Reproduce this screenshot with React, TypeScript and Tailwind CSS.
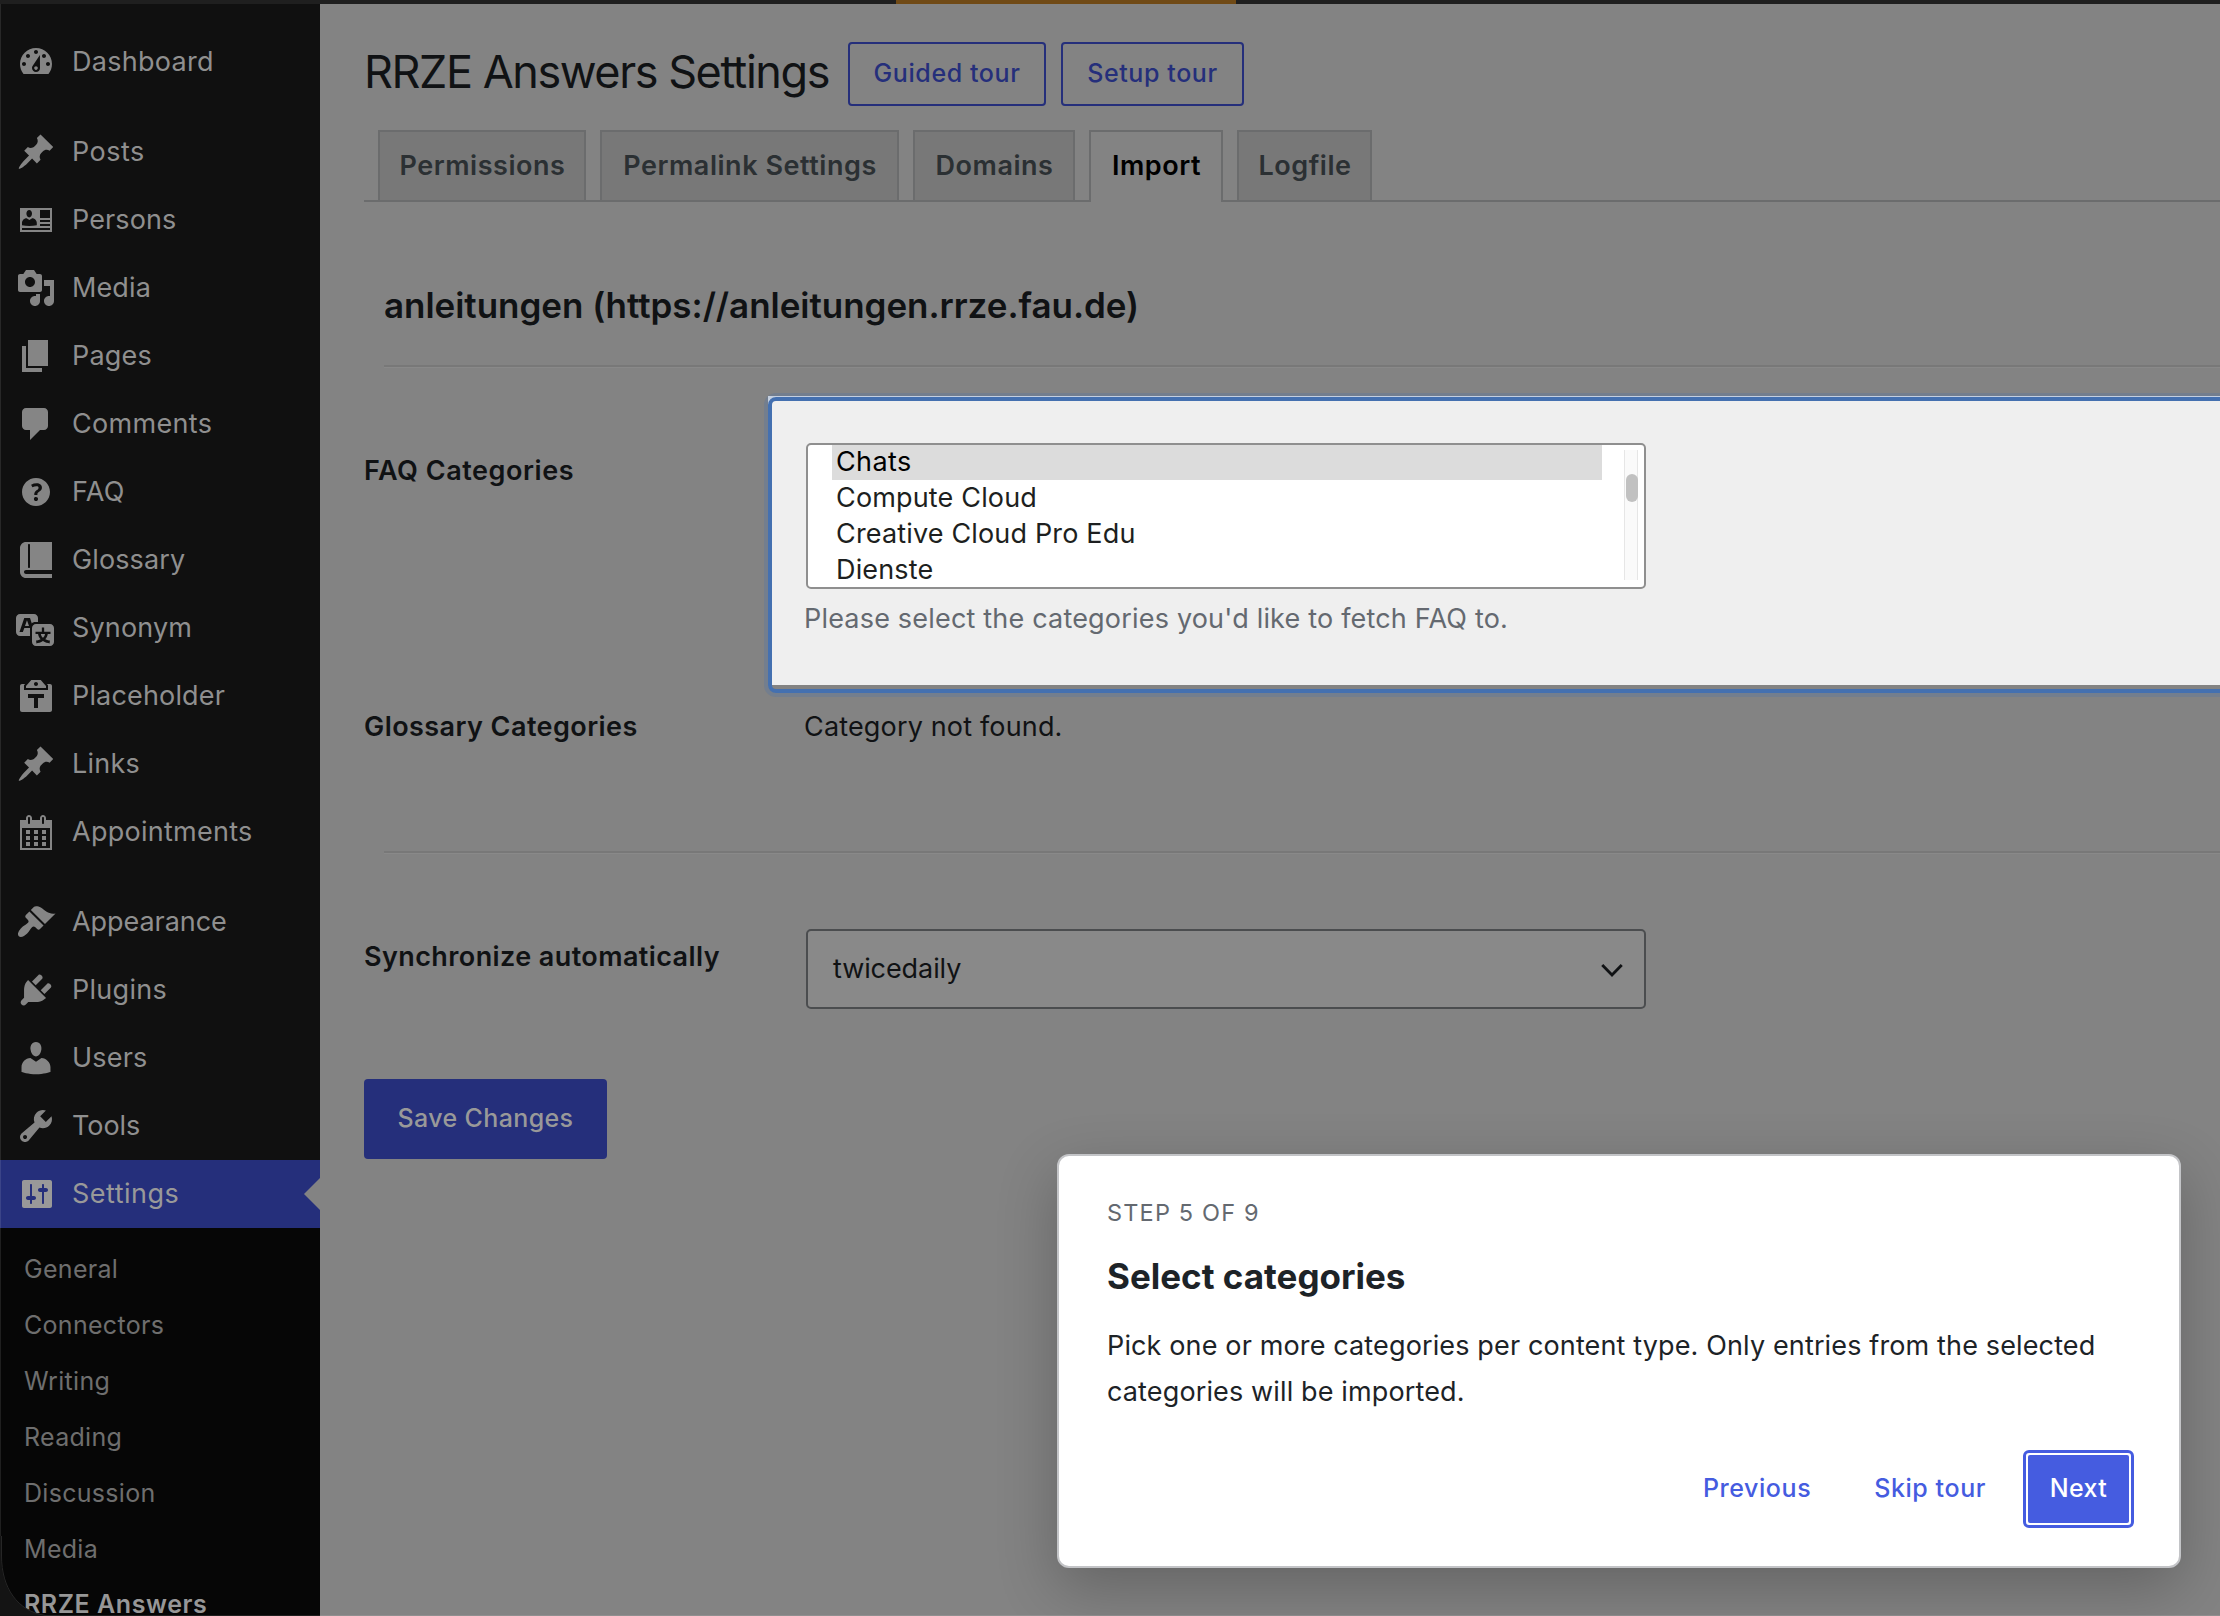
import type { ReactNode } from "react";

const icons: Record<string, string> = {
  dashboard:
    "M3.76 16h12.48c1.1-1.37 1.76-3.11 1.76-5 0-4.42-3.58-8-8-8s-8 3.58-8 8c0 1.89.66 3.63 1.76 5zM10 4c.55 0 1 .45 1 1s-.45 1-1 1-1-.45-1-1 .45-1 1-1zM6 6c.55 0 1 .45 1 1s-.45 1-1 1-1-.45-1-1 .45-1 1-1zM14 6c.55 0 1 .45 1 1s-.45 1-1 1-1-.45-1-1 .45-1 1-1zM4 10c.55 0 1 .45 1 1s-.45 1-1 1-1-.45-1-1 .45-1 1-1zM16 10c.55 0 1 .45 1 1s-.45 1-1 1-1-.45-1-1 .45-1 1-1zM11.95 6.5l.05 6.6c0 1.1-.9 1.95-2 1.95s-2-.9-2-2c0-.32.08-.62.21-.89L11.95 6.5zM10 12.15c.5 0 .9.4.9.9s-.4.9-.9.9-.9-.4-.9-.9.4-.9.9-.9z",
  pin: "M10.44 3.02l1.82-1.82 6.36 6.35-1.83 1.82c-1.05-.68-2.48-.57-3.41.36l-.75.75c-.92.93-1.04 2.35-.35 3.41l-1.83 1.82-2.41-2.41-2.8 2.79c-.42.42-3.38 2.71-3.8 2.29s1.86-3.39 2.28-3.81l2.79-2.79L4.1 9.36l1.83-1.82c1.05.69 2.48.57 3.4-.36l.75-.75c.93-.92 1.05-2.35.36-3.41z",
  idCard:
    "M18 16H2V4h16v12zM6.6 8.7C7.4 8.7 8 7.8 8 6.8S7.4 5 6.6 5 5.2 5.8 5.2 6.8s.6 1.9 1.4 1.9zM12 9h5V5h-5v4zM3 12.6c2.2.55 5 .55 7.4 0v-1.1c0-1.3-1-2.4-2.3-2.4l-1.4.9-1.4-.9C4 9.1 3 10.2 3 11.5v1.1zM17 11v-1h-5v1h5zM17 13v-1h-5v1h5zM17 15v-1H3v1h14z",
  media:
    "M13 11V4c0-.55-.45-1-1-1h-1.67L9 1H5L3.67 3H2c-.55 0-1 .45-1 1v7c0 .55.45 1 1 1h10c.55 0 1-.45 1-1zM7 4.5c1.38 0 2.5 1.12 2.5 2.5S8.38 9.5 7 9.5 4.5 8.38 4.5 7 5.62 4.5 7 4.5zM14 6h5v10.5c0 1.38-1.12 2.5-2.5 2.5S14 17.88 14 16.5s1.12-2.5 2.5-2.5c.17 0 .34.02.5.05V9h-3V6zm-4 8.05V13h2v3.5c0 1.38-1.12 2.5-2.5 2.5S7 17.88 7 16.5 8.12 14 9.5 14c.17 0 .34.02.5.05z",
  page: "M6 15V2h10v13H6zm-1 1h8v2H3V5h2v11z",
  comment:
    "M5 2h9c1.1 0 2 .9 2 2v7c0 1.1-.9 2-2 2h-2l-5 5v-5H5c-1.1 0-2-.9-2-2V4c0-1.1.9-2 2-2z",
  help: "M17 10c0-3.87-3.14-7-7-7-3.87 0-7 3.13-7 7s3.13 7 7 7c3.86 0 7-3.13 7-7zm-6.3 1.48H9.14v-.43c0-.38.08-.7.24-.98s.46-.57.88-.89c.41-.29.68-.53.81-.71.14-.18.2-.39.2-.62 0-.25-.09-.44-.28-.58-.19-.13-.45-.19-.79-.19-.58 0-1.25.19-2 .57l-.64-1.28c.87-.49 1.8-.74 2.77-.74.81 0 1.45.2 1.92.58.48.39.71.91.71 1.55 0 .43-.09.8-.29 1.11-.19.32-.57.67-1.11 1.06-.38.28-.61.49-.71.63-.1.15-.15.34-.15.57v.35zm-1.47 2.74c-.18-.17-.27-.42-.27-.73 0-.33.08-.58.26-.75s.43-.25.77-.25c.32 0 .57.09.75.26s.27.42.27.74c0 .3-.09.55-.27.72-.18.18-.43.27-.75.27-.33 0-.58-.09-.76-.26z",
  book: "M5 17h13v2H5c-1.66 0-3-1.34-3-3V4c0-1.66 1.34-3 3-3h13v14H5c-.55 0-1 .45-1 1s.45 1 1 1zm2-3.5v-11c0-.28-.22-.5-.5-.5s-.5.22-.5.5v11c0 .28.22.5.5.5s.5-.22.5-.5z",
  translation:
    "M11 7H9.49c-.63 0-1.25.3-1.59.7L7 5H4.13l-2.39 7h1.69l.74-2H7v4H2c-1.1 0-2-.9-2-2V5c0-1.1.9-2 2-2h7c1.1 0 2 .9 2 2v2zM6.51 9H4.49l1-2.93zM10 8h7c1.1 0 2 .9 2 2v7c0 1.1-.9 2-2 2h-7c-1.1 0-2-.9-2-2v-7c0-1.1.9-2 2-2zm7.25 5v-1.08h-3.17V9.75h-1.16v2.17H9.75V13h1.28c.11.85.56 1.85 1.28 2.62-.87.36-1.89.62-2.31.62-.01.02.22.97.2 1.46.84 0 2.21-.5 3.28-1.15 1.09.65 2.48 1.15 3.34 1.15-.02-.49.2-1.44.2-1.46-.43 0-1.49-.27-2.38-.63.7-.77 1.14-1.77 1.25-2.61h1.36zm-3.81 1.93c-.5-.46-.85-1.13-1.01-1.93h2.09c-.17.8-.51 1.47-1 1.93l-.04.03s-.03-.02-.04-.03z",
  clipboard:
    "M12.38 2L15 5v1H5V5l2.64-3h4.74zM10 5c.55 0 1-.44 1-1 0-.55-.45-1-1-1s-1 .45-1 1c0 .56.45 1 1 1zm5.45-1H17c.55 0 1 .45 1 1v12c0 .56-.45 1-1 1H3c-.55 0-1-.44-1-1V5c0-.55.45-1 1-1h1.55L4 4.63V7h12V4.63zM14 11V9H6v2h3v5h2v-5h3z",
  calendar:
    "M15 4h3v15H2V4h3V3c0-.41.15-.76.44-1.06.29-.29.65-.44 1.06-.44s.77.15 1.06.44c.29.3.44.65.44 1.06v1h4V3c0-.41.15-.76.44-1.06.29-.29.65-.44 1.06-.44s.77.15 1.06.44c.29.3.44.65.44 1.06v1zM6 3v2.5c0 .14.05.26.15.36.09.09.21.14.35.14s.26-.05.35-.14c.1-.1.15-.22.15-.36V3c0-.14-.05-.26-.15-.35-.09-.1-.21-.15-.35-.15s-.26.05-.35.15c-.1.09-.15.21-.15.35zm7 0v2.5c0 .14.05.26.14.36.1.09.22.14.36.14s.26-.05.36-.14c.09-.1.14-.22.14-.36V3c0-.14-.05-.26-.14-.35-.1-.1-.22-.15-.36-.15s-.26.05-.36.15c-.09.09-.14.21-.14.35zm4 15V8H3v10h14zM7 9v2H5V9h2zm2 0h2v2H9V9zm4 2V9h2v2h-2zm-6 1v2H5v-2h2zm2 0h2v2H9v-2zm4 2v-2h2v2h-2zm-6 1v2H5v-2h2zm4 2H9v-2h2v2zm4 0h-2v-2h2v2z",
  brush:
    "M14.48 11.06L7.41 3.99l1.5-1.5c.5-.56 2.3-.47 3.51.32 1.21.8 1.43 1.28 2.91 2.1 1.18.64 2.45 1.26 4.45.85zm-.71.71L6.7 4.7 4.93 6.47c-.39.39-.39 1.02 0 1.41l1.06 1.06c.39.39.39 1.03 0 1.42-.6.6-1.43 1.11-2.21 1.69-.35.26-.7.53-1.01.84C1.43 14.23.4 16.08 1.4 17.07c.99 1 2.84-.03 4.18-1.36.31-.31.58-.66.85-1.02.57-.78 1.08-1.61 1.69-2.21.39-.39 1.02-.39 1.41 0l1.06 1.06c.39.39 1.02.39 1.41 0z",
  plug: "M13.11 4.36L9.87 7.6 8 5.73l3.24-3.24c.35-.34 1.05-.2 1.56.32.52.51.66 1.21.31 1.55zm-8 1.77l.91-1.12 9.01 9.01-1.19.84c-.71.71-2.63 1.16-3.82 1.16H6.14L4.9 17.26c-.59.59-1.54.59-2.12 0-.59-.58-.59-1.53 0-2.12l1.24-1.24v-3.88c0-1.13.4-3.19 1.09-3.89zm7.26 3.97l3.24-3.24c.34-.35 1.04-.21 1.55.31.52.51.66 1.21.31 1.55l-3.24 3.25z",
  user: "M10 9.25c-2.27 0-2.73-3.44-2.73-3.44C7 4.02 7.82 2 9.97 2c2.16 0 2.98 2.02 2.71 3.81 0 0-.41 3.44-2.68 3.44zm0 2.57L12.72 10c2.39 0 4.52 2.33 4.52 4.53v2.49s-3.65 1.13-7.24 1.13c-3.65 0-7.24-1.13-7.24-1.13v-2.49c0-2.25 1.94-4.48 4.47-4.48z",
  wrench:
    "M16.68 9.77c-1.34 1.34-3.3 1.67-4.95.99l-5.41 6.52c-.99.99-2.59.99-3.58 0s-.99-2.59 0-3.57l6.52-5.42c-.68-1.65-.35-3.61.99-4.95 1.28-1.28 3.12-1.62 4.72-1.06l-2.89 2.89 2.82 2.82 2.86-2.87c.53 1.58.18 3.39-1.08 4.65zM3.81 16.21c.4.39 1.04.39 1.43 0 .4-.4.4-1.04 0-1.43-.39-.4-1.03-.4-1.43 0-.39.39-.39 1.03 0 1.43z",
  sliders:
    "M18 16V4c0-.55-.45-1-1-1H4c-.55 0-1 .45-1 1v12c0 .55.45 1 1 1h13c.55 0 1-.45 1-1zM8 11h1c.55 0 1 .45 1 1s-.45 1-1 1H8v1.5c0 .28-.22.5-.5.5s-.5-.22-.5-.5V13H6c-.55 0-1-.45-1-1s.45-1 1-1h1V5.5c0-.28.22-.5.5-.5s.5.22.5.5V11zm5-2h-1c-.55 0-1-.45-1-1s.45-1 1-1h1V5.5c0-.28.22-.5.5-.5s.5.22.5.5V7h1c.55 0 1 .45 1 1s-.45 1-1 1h-1v5.5c0 .28-.22.5-.5.5s-.5-.22-.5-.5V9z",
};

const menuGroups: { label: string; icon: string; tracking: string }[][] = [
  [{ label: "Dashboard", icon: "dashboard", tracking: "tracking-[0.01em]" }],
  [
    { label: "Posts", icon: "pin", tracking: "tracking-[0.018em]" },
    { label: "Persons", icon: "idCard", tracking: "tracking-[0.004em]" },
    { label: "Media", icon: "media", tracking: "tracking-[0.004em]" },
    { label: "Pages", icon: "page", tracking: "tracking-[0.008em]" },
    { label: "Comments", icon: "comment", tracking: "tracking-[0.012em]" },
    { label: "FAQ", icon: "help", tracking: "tracking-[0.01em]" },
    { label: "Glossary", icon: "book", tracking: "tracking-[0.004em]" },
    { label: "Synonym", icon: "translation", tracking: "tracking-[0.006em]" },
    { label: "Placeholder", icon: "clipboard", tracking: "tracking-[0.006em]" },
    { label: "Links", icon: "pin", tracking: "tracking-[0.008em]" },
    { label: "Appointments", icon: "calendar", tracking: "tracking-[0.01em]" },
  ],
  [
    { label: "Appearance", icon: "brush", tracking: "tracking-[-0.002em]" },
    { label: "Plugins", icon: "plug", tracking: "tracking-[0.01em]" },
    { label: "Users", icon: "user", tracking: "tracking-[0.008em]" },
    { label: "Tools", icon: "wrench", tracking: "tracking-[-0.002em]" },
  ],
];

const subItems = ["General", "Connectors", "Writing", "Reading", "Discussion", "Media"];

const tabs = [
  { label: "Permissions", width: "w-[208px]" },
  { label: "Permalink Settings", width: "w-[299px]" },
  { label: "Domains", width: "w-[162px]" },
  { label: "Import", width: "w-[134px]", active: true },
  { label: "Logfile", width: "w-[135px]" },
];

function Glyph({ name }: { name: string }) {
  return (
    <svg viewBox="0 0 20 20" className="h-10 w-10 shrink-0" fill="currentColor" fillRule="evenodd">
      <path d={icons[name]} />
    </svg>
  );
}

function MenuItem({ label, icon, tracking }: { label: string; icon: string; tracking: string }) {
  return (
    <a className="flex h-[68px] items-center pl-4 text-[#858585]">
      <Glyph name={icon} />
      <span className={`ml-4 text-[27px] text-[#8f8f8f] ${tracking}`}>{label}</span>
    </a>
  );
}

function Sidebar() {
  return (
    <nav className="flex w-[320px] shrink-0 flex-col bg-[#101010] pt-6">
      <div className="flex flex-col gap-[22px]">
        {menuGroups.map((group, i) => (
          <div key={i}>
            {group.map((item) => (
              <MenuItem key={item.label} {...item} />
            ))}
          </div>
        ))}
      </div>
      <a className="relative flex h-[68px] shrink-0 items-center bg-[#252f7b] pl-4 text-[#999999]">
        <Glyph name="sliders" />
        <span className="ml-4 text-[27px] tracking-[0.018em]">Settings</span>
        <span className="absolute top-[18px] right-0 h-0 w-0 border-y-[16px] border-r-[16px] border-y-transparent border-r-[#838383]" />
      </a>
      <div className="flex-1 bg-[#060606] pt-[13px] pl-6 text-[25px] tracking-[0.012em] text-[#6e6e6e]">
        {subItems.map((item) => (
          <a key={item} className="block h-14 leading-[56px]">
            {item}
          </a>
        ))}
        <a className="block pt-3 leading-[31px] font-semibold tracking-[0.022em] text-[#979797]">
          RRZE&nbsp;Answers
        </a>
      </div>
    </nav>
  );
}

function OutlineButton({ width, children }: { width: string; children: ReactNode }) {
  return (
    <button
      className={`flex h-16 items-center justify-center rounded-[4px] border-2 border-[#252f7b] text-[25px] font-medium tracking-[0.024em] text-[#252f7b] ${width}`}
    >
      {children}
    </button>
  );
}

function Listbox() {
  return (
    <div className="flex h-[146px] w-[840px] overflow-hidden rounded-[5px] border-2 border-[#8f8f8f] bg-white pl-6">
      <div className="w-[770px] text-[27px] leading-9 tracking-[0.006em] text-[#1d1f20]">
        <div className="-mt-px h-9 bg-[#dcdcdc] pl-1 tracking-[0.014em] text-black">Chats</div>
        <div className="h-9 pl-1">Compute Cloud</div>
        <div className="h-9 pl-1">Creative Cloud Pro Edu</div>
        <div className="h-9 pl-1">Dienste</div>
      </div>
      <div className="mt-[5px] ml-[22px] h-[130px] w-[14px] border-x border-[#e6e6e6] bg-[#fafafa] pt-6">
        <div className="ml-px h-7 w-3 rounded-full bg-[#c1c1c1]" />
      </div>
    </div>
  );
}

function TourDialog() {
  return (
    <section className="absolute top-[1154px] left-[1057px] flex h-[414px] w-[1124px] flex-col rounded-[12px] border-2 border-[#c3c4c7] bg-white pt-[42px] pr-[45px] pl-12 text-[#1d2327] shadow-[0_20px_60px_rgba(0,0,0,0.24)]">
      <p className="text-[23.5px] leading-[30px] tracking-[0.05em] text-[#646970]">STEP 5 OF 9</p>
      <h2 className="mt-[26px] text-[35px] leading-[44px] font-bold">Select categories</h2>
      <p className="mt-[25px] text-[27px] leading-[46px] tracking-[0.005em] whitespace-nowrap">
        Pick one or more categories per content type. Only entries from the selected
        <br />
        categories will be imported.
      </p>
      <div className="mt-[35px] flex h-[78px] items-center justify-end text-[25px] font-medium tracking-[0.023em] text-[#455ce0]">
        <button>Previous</button>
        <button className="ml-[63px]">Skip tour</button>
        <button className="ml-[37px] flex h-[78px] w-[111px] rounded-[6px] border-[3px] border-[#455ce0] bg-white p-[2px]">
          <span className="flex flex-1 items-center justify-center rounded-[2px] bg-[#455ce0] tracking-[0.014em] text-white">
            Next
          </span>
        </button>
      </div>
    </section>
  );
}

export default function App() {
  return (
    <div className="relative flex h-[1616px] w-[2220px] flex-col overflow-hidden bg-[#838383] font-['Inter',sans-serif] text-[#101214]">
      <div className="flex h-1 shrink-0 bg-[#1f1f1f]">
        <div className="ml-[896px] w-[340px] bg-[#704a16]" />
      </div>
      <div className="flex flex-1">
        <Sidebar />
        <main className="min-w-0 flex-1 pt-[38px] pl-11">
          <div className="flex h-16 items-center">
            <h1 className="mb-1 w-[484px] text-[45px] tracking-[-0.032em] whitespace-nowrap">
              RRZE Answers Settings
            </h1>
            <OutlineButton width="w-[198px]">Guided tour</OutlineButton>
            <div className="w-[15px]" />
            <OutlineButton width="w-[183px]">Setup tour</OutlineButton>
          </div>

          <div className="mt-6 flex h-[72px] gap-[14px] border-b-2 border-[#6b6c6d] pl-[14px]">
            {tabs.map((tab) => (
              <a
                key={tab.label}
                className={`border-x-2 border-t-2 border-[#6b6c6d] pl-px text-center text-[27px] leading-[68px] font-semibold tracking-[0.02em] ${tab.width} ${
                  tab.active ? "-mb-[2px] h-[72px] bg-[#838383] text-black" : "h-[70px] bg-[#787878] text-[#2b3033]"
                }`}
              >
                {tab.label}
              </a>
            ))}
          </div>

          <h2 className="mt-[82px] ml-5 text-[35px] leading-[42px] font-semibold tracking-[-0.001em]">
            anleitungen (https://anleitungen.rrze.fau.de)
          </h2>
          <div className="mt-[39px] ml-5 h-[3px] border-t-2 border-b border-t-[#787878] border-b-[#898989]" />

          <div className="mt-7 flex h-[289px]">
            <div className="w-[404px] pt-14 text-[27px] leading-[38px] font-semibold tracking-[0.02em]">
              FAQ Categories
            </div>
            <div className="relative flex-1 bg-[#efefef] pt-[47px] pl-[38px]">
              <div className="absolute top-px -right-5 -bottom-2 left-0 rounded-[8px] border-4 border-[#4470b0] shadow-[0_0_0_4px_rgba(68,112,176,0.25)]" />
              <Listbox />
              <p className="mt-[11px] -ml-[2px] text-[27px] leading-[38px] tracking-[0.007em] text-[#646970]">
                Please select the categories you'd like to fetch FAQ to.
              </p>
            </div>
          </div>

          <div className="mt-[23px] flex text-[27px] leading-[38px]">
            <div className="w-[440px] font-semibold tracking-[0.016em]">Glossary Categories</div>
            <div className="tracking-[0.006em]">Category not found.</div>
          </div>
          <div className="mt-[105px] ml-5 h-[3px] border-t-2 border-b border-t-[#787878] border-b-[#898989]" />

          <div className="mt-[75px] flex">
            <div className="w-[442px] pt-[9px] text-[27px] leading-[38px] font-semibold tracking-[0.015em]">
              Synchronize automatically
            </div>
            <div className="flex h-20 w-[840px] items-center justify-between rounded-[5px] border-2 border-[#4b4d4f] bg-[#898989] pr-[19px] pl-[25px] text-[27px] tracking-[-0.003em]">
              <span>twicedaily</span>
              <svg viewBox="0 0 20 20" className="mt-0.5 h-8 w-[26px]" fill="none" stroke="#101214" strokeWidth="2.2">
                <path d="M2.5 6.2l7.5 7.6 7.5-7.6" />
              </svg>
            </div>
          </div>

          <button className="mt-[70px] flex h-20 w-[243px] items-center justify-center rounded-[4px] bg-[#252f7b] text-[25px] font-medium tracking-[0.0146em] text-[#999999]">
            Save Changes
          </button>
        </main>
      </div>

      <TourDialog />

      <svg className="absolute bottom-0 left-0 h-[80px] w-[60px]" viewBox="0 0 60 80">
        <path d="M0 0h1v20c0 32 16 55 45 59v1H0z" fill="#141414" />
        <path d="M1.5 0v20c0 32 16 55 43.500 59.500H60" fill="none" stroke="#262626" />
      </svg>
      <div className="absolute top-1 bottom-20 left-0 w-px bg-white/10" />
      <div className="absolute right-0 bottom-0 left-[60px] h-px bg-white/10" />
    </div>
  );
}
